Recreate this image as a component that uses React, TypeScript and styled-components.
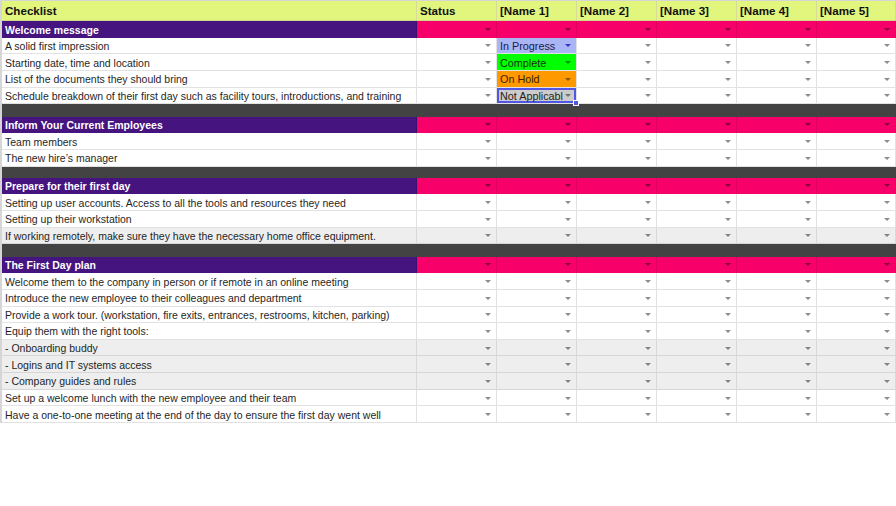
import React from "react";
import styled, { createGlobalStyle, css } from "styled-components";

const GlobalStyle = createGlobalStyle`
  html, body { margin: 0; padding: 0; background: #ffffff; overflow: hidden; }
  body { font-family: "Liberation Sans", Arial, sans-serif; }
  * { box-sizing: border-box; }
`;

const ROW = 50 / 3;

const Sheet = styled.div`
  width: 896px;
  border-top: 1px solid #d6d6d6;
  border-left: 2px solid #d6d6d6;
  display: flex;
  flex-direction: column;
`;

const Row = styled.div<{ $h: number }>`
  display: grid;
  grid-template-columns: 415px repeat(5, 80px) 79px;
  height: ${(p) => p.$h}px;
`;

const Divider = styled.div<{ $h: number }>`
  height: ${(p) => p.$h}px;
  background: #434343;
`;

type Tone = "header" | "title" | "pink" | "plain" | "shaded";

const toneStyles: Record<Tone, ReturnType<typeof css>> = {
  header: css`
    background: #e2f57d;
    color: #111;
    font-weight: bold;
    font-size: 11.6px;
    border-right: 1px solid #d3dc9a;
    border-bottom: 1px solid #cfd88c;
  `,
  title: css`
    background: #45147f;
    color: #ffffff;
    font-weight: bold;
    font-size: 10.5px;
    padding-top: 1px;
    border-right: 1px solid #3b1070;
  `,
  pink: css`
    background: #f7006a;
    color: #111;
    font-size: 10.5px;
    border-right: 1px solid #e0005f;
  `,
  plain: css`
    background: #ffffff;
    color: #1f1f1f;
    font-size: 10.5px;
    padding-top: 1px;
    border-right: 1px solid #e2e2e2;
    border-bottom: 1px solid #e2e2e2;
  `,
  shaded: css`
    background: #eeeeee;
    color: #1f1f1f;
    font-size: 10.5px;
    padding-top: 1px;
    border-right: 1px solid #d9d9d9;
    border-bottom: 1px solid #d6d6d6;
  `,
};

const Cell = styled.div<{ $tone: Tone }>`
  position: relative;
  display: flex;
  align-items: center;
  justify-content: space-between;
  padding-left: 3px;
  padding-right: 5px;
  white-space: nowrap;
  overflow: hidden;
  line-height: 12px;
  ${(p) => toneStyles[p.$tone]}
`;

type StatusKind = "progress" | "complete" | "hold" | "na";

const statusColors: Record<StatusKind, { bg: string; fg: string; caret: string }> = {
  progress: { bg: "#a9b5f5", fg: "#1b1b45", caret: "#3434c8" },
  complete: { bg: "#00ff00", fg: "#143214", caret: "rgba(0,0,0,0.45)" },
  hold: { bg: "#ff9900", fg: "#3a1f00", caret: "rgba(0,0,0,0.45)" },
  na: { bg: "#cccccc", fg: "#222222", caret: "rgba(0,0,0,0.45)" },
};

const StatusCell = styled(Cell)<{ $kind: StatusKind; $selected?: boolean }>`
  background: ${(p) => statusColors[p.$kind].bg};
  color: ${(p) => statusColors[p.$kind].fg};
  font-size: 10.8px;
  overflow: visible;
  ${(p) =>
    p.$selected &&
    css`
      box-shadow: inset 0 0 0 2px #5258e4;
    `}
`;

const StatusText = styled.span`
  overflow: hidden;
  flex: 1;
  min-width: 0;
  white-space: nowrap;
  text-overflow: clip;
`;

const Caret = styled.span<{ $color?: string }>`
  flex: none;
  width: 0;
  height: 0;
  margin-left: 2px;
  border-left: 3px solid transparent;
  border-right: 3px solid transparent;
  border-top: 3.5px solid ${(p) => p.$color || "rgba(0,0,0,0.45)"};
`;

const FillHandle = styled.span`
  position: absolute;
  right: -3px;
  bottom: -3px;
  width: 6px;
  height: 6px;
  background: #5258e4;
  border: 1px solid #ffffff;
  z-index: 2;
`;

type Task = { text: string; shaded?: boolean; status?: StatusKind };
type Section = { title: string; tasks: Task[]; gap?: number };

const sections: Section[] = [
  {
    title: "Welcome message",
    gap: 12.33,
    tasks: [
      { text: "A solid first impression", status: "progress" },
      { text: "Starting date, time and location", status: "complete" },
      { text: "List of the documents they should bring", status: "hold" },
      {
        text: "Schedule breakdown of their first day such as facility tours, introductions, and training",
        status: "na",
      },
    ],
  },
  {
    title: "Inform Your Current Employees",
    gap: 11,
    tasks: [{ text: "Team members" }, { text: "The new hire\u2019s manager" }],
  },
  {
    title: "Prepare for their first day",
    gap: 12.33,
    tasks: [
      { text: "Setting up user accounts. Access to all the tools and resources they need" },
      { text: "Setting up their workstation" },
      {
        text: "If working remotely, make sure they have the necessary home office equipment.",
        shaded: true,
      },
    ],
  },
  {
    title: "The First Day plan",
    tasks: [
      { text: "Welcome them to the company in person or if remote in an online meeting" },
      { text: "Introduce the new employee to their colleagues and department" },
      { text: "Provide a work tour. (workstation, fire exits, entrances, restrooms, kitchen, parking)" },
      { text: "Equip them with the right tools:" },
      { text: "- Onboarding buddy", shaded: true },
      { text: "- Logins and IT systems access", shaded: true },
      { text: "- Company guides and rules", shaded: true },
      { text: "Set up a welcome lunch with the new employee and their team" },
      { text: "Have a one-to-one meeting at the end of the day to ensure the first day went well" },
    ],
  },
];

const statusLabel: Record<StatusKind, string> = {
  progress: "In Progress",
  complete: "Complete",
  hold: "On Hold",
  na: "Not Applicable",
};

const headers = ["Checklist", "Status", "[Name 1]", "[Name 2]", "[Name 3]", "[Name 4]", "[Name 5]"];

function TaskRow({ task }: { task: Task }) {
  const tone: Tone = task.shaded ? "shaded" : "plain";
  return (
    <Row $h={ROW}>
      <Cell $tone={tone}>{task.text}</Cell>
      {Array.from({ length: 6 }).map((_, i) => {
        if (i === 1 && task.status) {
          const k = task.status;
          return (
            <StatusCell key={i} $tone={tone} $kind={k} $selected={k === "na"}>
              <StatusText>{statusLabel[k]}</StatusText>
              <Caret $color={statusColors[k].caret} />
              {k === "na" && <FillHandle />}
            </StatusCell>
          );
        }
        return (
          <Cell key={i} $tone={tone}>
            <span />
            <Caret />
          </Cell>
        );
      })}
    </Row>
  );
}

function SectionBlock({ section }: { section: Section }) {
  return (
    <>
      <Row $h={ROW}>
        <Cell $tone="title">{section.title}</Cell>
        {Array.from({ length: 6 }).map((_, i) => (
          <Cell key={i} $tone="pink">
            <span />
            <Caret $color="rgba(60,0,20,0.6)" />
          </Cell>
        ))}
      </Row>
      {section.tasks.map((t, i) => (
        <TaskRow key={i} task={t} />
      ))}
      {section.gap ? <Divider $h={section.gap} /> : null}
    </>
  );
}

export default function App() {
  return (
    <>
      <GlobalStyle />
      <Sheet>
        <Row $h={20}>
          {headers.map((h) => (
            <Cell key={h} $tone="header">
              {h}
            </Cell>
          ))}
        </Row>
        {sections.map((s) => (
          <SectionBlock key={s.title} section={s} />
        ))}
      </Sheet>
    </>
  );
}
